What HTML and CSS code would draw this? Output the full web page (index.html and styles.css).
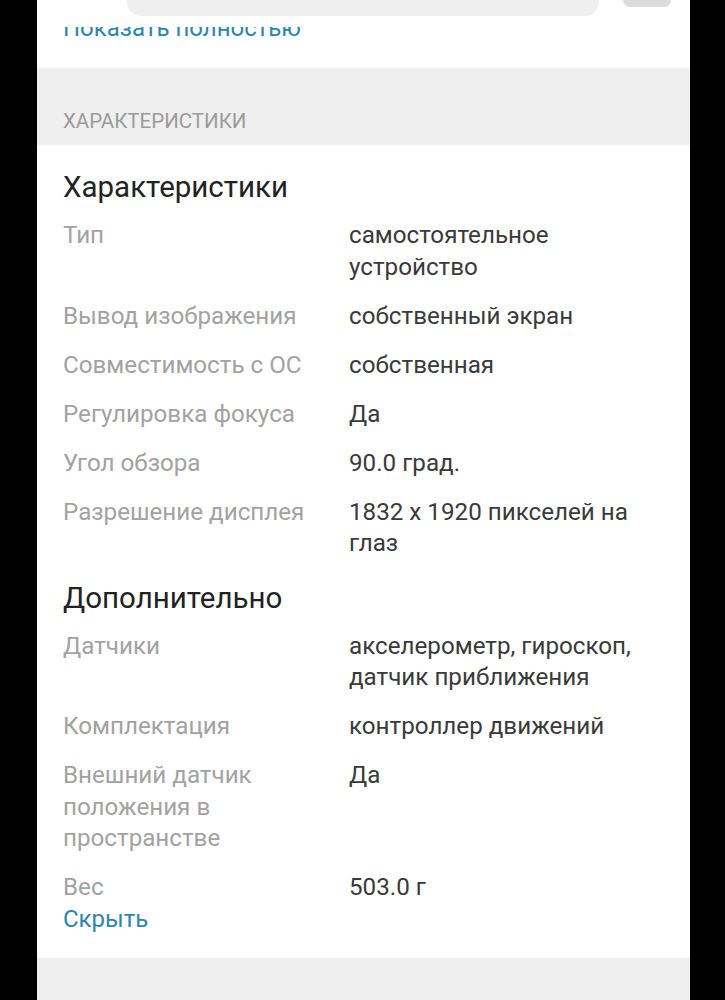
FILE: index.html
```html
<!DOCTYPE html>
<html lang="ru">
<head>
<meta charset="utf-8">
<title>Характеристики</title>
<link rel="stylesheet" href="styles.css">
</head>
<body>
<div class="screen">
  <header class="topbar">
    <div class="search"></div>
    <div class="action"></div>
  </header>
  <div class="clip">
    <a class="link show-more">Показать полностью</a>
  </div>
  <div class="band">ХАРАКТЕРИСТИКИ</div>
  <section class="specs">
    <h2 class="group-title">Характеристики</h2>
    <div class="row"><div class="label">Тип</div><div class="value">самостоятельное устройство</div></div>
    <div class="row"><div class="label">Вывод изображения</div><div class="value">собственный экран</div></div>
    <div class="row"><div class="label">Совместимость с ОС</div><div class="value">собственная</div></div>
    <div class="row"><div class="label">Регулировка фокуса</div><div class="value">Да</div></div>
    <div class="row"><div class="label">Угол обзора</div><div class="value">90.0 град.</div></div>
    <div class="row"><div class="label">Разрешение дисплея</div><div class="value">1832 x 1920 пикселей на глаз</div></div>
    <h2 class="group-title second">Дополнительно</h2>
    <div class="row"><div class="label">Датчики</div><div class="value">акселерометр, гироскоп, датчик приближения</div></div>
    <div class="row"><div class="label">Комплектация</div><div class="value">контроллер движений</div></div>
    <div class="row"><div class="label">Внешний датчик положения в пространстве</div><div class="value">Да</div></div>
    <div class="row last"><div class="label">Вес</div><div class="value">503.0 г</div></div>
    <a class="link hide">Скрыть</a>
  </section>
  <div class="band bottom"></div>
</div>
</body>
</html>
```

FILE: styles.css
```css
html, body {
  margin: 0;
  padding: 0;
  background: #000;
}
body {
  font-family: Roboto, "Noto Sans", "Liberation Sans", sans-serif;
}
.screen {
  width: 653px;
  margin-left: 37px;
  height: 1000px;
  background: #fff;
  overflow: hidden;
}
.topbar {
  height: 27px;
  display: flex;
  align-items: flex-start;
  background: #fff;
}
.search {
  margin-left: 90px;
  width: 472px;
  height: 16px;
  background: #efefef;
  border-radius: 0 0 14px 14px;
}
.action {
  margin-left: 24px;
  width: 48px;
  height: 7px;
  background: #dcdcdc;
  border-radius: 0 0 12px 12px;
}
.clip {
  display: flow-root;
  height: 41px;
  overflow: hidden;
  padding-left: 26px;
}
.link {
  display: block;
  color: #2a86ae;
  font-size: 24px;
  line-height: 31.5px;
  text-decoration: none;
}
.show-more {
  margin-top: -14px;
}
.band {
  height: 77px;
  background: #efefef;
  color: #9b9b9b;
  font-size: 20.5px;
  padding-left: 26px;
  padding-top: 41px;
  line-height: 24px;
  box-sizing: border-box;
}
.band.bottom {
  height: 60px;
}
.specs {
  padding: 26px 26px 23px 26px;
}
.group-title {
  margin: 0 0 17px 0;
  font-size: 29.5px;
  line-height: 32px;
  font-weight: 400;
  color: #222;
}
.group-title.second {
  margin-top: 22px;
}
.row {
  display: flex;
  font-size: 24.2px;
  line-height: 31.5px;
  margin-bottom: 17.5px;
}
.row.last {
  margin-bottom: 0;
}
.label {
  width: 270px;
  flex: none;
  color: #a2a2a2;
  margin-right: 16px;
}
.value {
  flex: 1;
  color: #3a3a3a;
}
```
